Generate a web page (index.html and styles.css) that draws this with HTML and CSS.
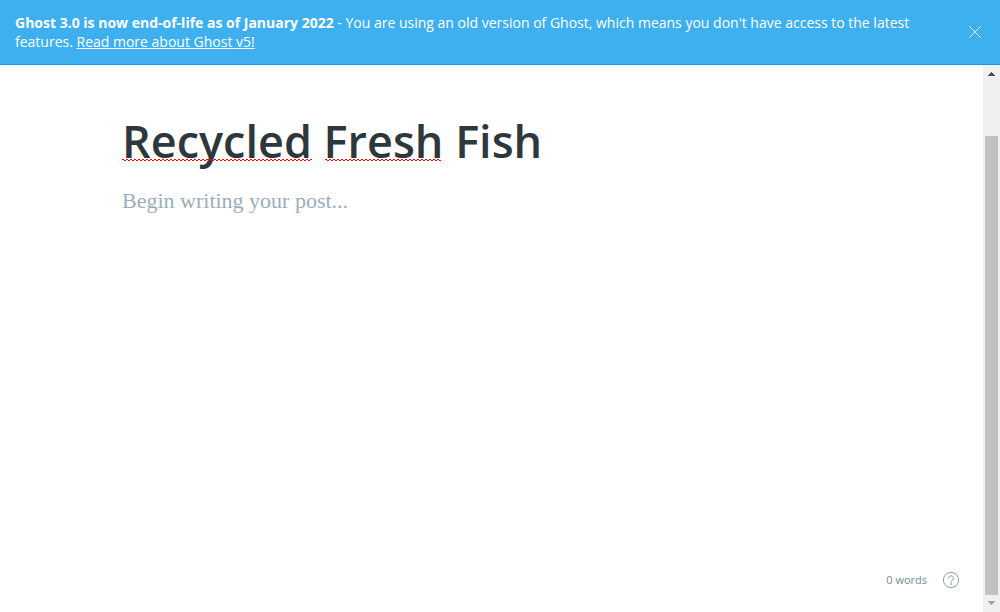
FILE: index.html
```html
<!DOCTYPE html>
<html lang="en">
<head>
<meta charset="utf-8">
<meta name="viewport" content="width=device-width, initial-scale=1">
<title>Recycled Fresh Fish</title>
<link rel="stylesheet" href="styles.css">
</head>
<body>
<div class="app">
  <header class="banner">
    <p class="banner-text"><strong>Ghost 3.0 is now end-of-life as of January 2022</strong> - You are using an old version of Ghost, which means you don't have access to the latest features. <a class="banner-link" href="#">Read more about Ghost v5!</a></p>
    <button class="banner-close" type="button" aria-label="Close">
      <svg width="12" height="12" viewBox="0 0 12 12" fill="none" stroke="currentColor" stroke-linecap="round"><path d="M.5.5l11 11M11.5.5l-11 11"/></svg>
    </button>
  </header>
  <div class="workspace">
    <main class="editor">
      <div class="title-field">
        <input class="title-input" type="text" value="Recycled Fresh Fish" aria-label="Post title" spellcheck="false">
        <div class="spelling" aria-hidden="true"><span class="squiggle squiggle-long"></span><span class="squiggle squiggle-short"></span></div>
      </div>
      <textarea class="post-input" placeholder="Begin writing your post..." aria-label="Post content"></textarea>
      <footer class="status">
        <span class="word-count">0 words</span>
        <a class="help" href="#" aria-label="Help">
          <svg width="18" height="18" viewBox="0 0 18 18" fill="none" stroke="currentColor" stroke-linecap="round" stroke-linejoin="round"><circle cx="9" cy="9" r="7.6"/><path d="M6.6 7.2a2.4 2.4 0 1 1 3.3 2.2c-.6.3-.9.7-.9 1.3v.5"/><circle cx="9" cy="13" r=".3"/></svg>
        </a>
      </footer>
    </main>
    <div class="scrollbar" aria-hidden="true">
      <svg class="arrow-up" width="17" height="17" viewBox="0 0 17 17" shape-rendering="crispEdges"><path fill="currentColor" d="M8 7h1v1h1v1h1v1h1v1H5v-1h1V9h1V8h1z"/></svg>
      <div class="track"><div class="thumb"></div></div>
      <svg class="arrow-down" width="17" height="17" viewBox="0 0 17 17" shape-rendering="crispEdges"><path fill="currentColor" d="M5 6h7v1h-1v1h-1v1H9v1H8V9H7V8H6V7H5z"/></svg>
    </div>
  </div>
</div>
</body>
</html>
```
FILE: styles.css
```css
* { box-sizing: border-box; }
body {
  margin: 0;
  background: #fff;
  color: #2d373c;
  font-family: "Open Sans", "Noto Sans", sans-serif;
}
.app { display: flex; flex-direction: column; height: 100vh; }
.banner {
  display: flex;
  align-items: center;
  gap: 32px;
  padding: 13px 16px 13px 15px;
  background: #3eb0ef;
  border-bottom: 1px solid #149ae8;
  color: #fff;
}
.banner-text { flex: 1; margin: 0; font-size: 14px; line-height: 19px; }
.banner-link { color: inherit; }
.banner-close {
  display: flex;
  padding: 3px;
  border: 0;
  background: none;
  color: #d5effd;
}
.workspace { flex: 1; display: flex; min-height: 0; }
.editor { flex: 1; display: flex; flex-direction: column; padding: 44px 23px 23px 122px; }
.title-field { position: relative; }
.title-input {
  display: block;
  width: 100%;
  height: 62px;
  padding: 0;
  border: 0;
  outline: 0;
  background: none;
  color: inherit;
  font-family: inherit;
  font-size: 45px;
  font-weight: 600;
}
.spelling { position: absolute; left: 0; top: 50px; display: flex; gap: 13px; pointer-events: none; }
.squiggle {
  height: 2px;
  background:
    repeating-linear-gradient(90deg, #f00 0 2px, transparent 2px 4px) 0 0 / 100% 1px no-repeat,
    repeating-linear-gradient(90deg, transparent 0 2px, #f00 2px 4px) 0 1px / 100% 1px no-repeat;
}
.squiggle-long { width: 190px; }
.squiggle-short { width: 116px; }
.post-input {
  flex: 1;
  margin: 16px 0 0;
  padding: 0;
  border: 0;
  outline: 0;
  resize: none;
  color: #2d373c;
  font-family: Georgia, "Liberation Serif", serif;
  font-size: 22px;
  line-height: 28px;
}
.post-input::placeholder { color: #9baeb8; opacity: 1; }
.status { display: flex; justify-content: flex-end; align-items: center; gap: 15px; }
.word-count { color: #738a94; font-size: 11px; line-height: 18px; }
.help { display: flex; color: #8da1ab; }
.scrollbar { display: flex; flex-direction: column; width: 17px; background: #f0f0f0; }
.arrow-up { color: #505050; }
.arrow-down { color: #a3a3a3; }
.track { flex: 1; display: flex; flex-direction: column; justify-content: flex-end; padding: 0 2px; }
.thumb { height: 89.5%; background: #c1c1c1; }
```
